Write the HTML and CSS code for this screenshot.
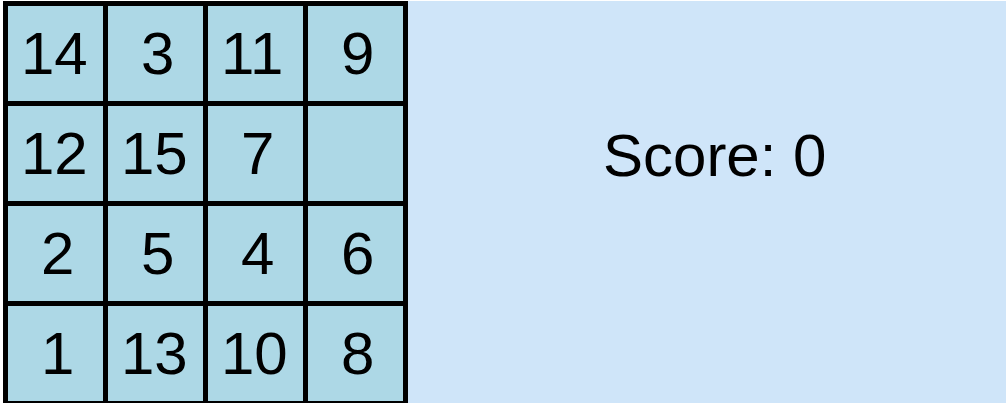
FILE: index.html
```html
<!DOCTYPE html>
<html lang="en">
<head>
<meta charset="utf-8">
<title>Fifteen Puzzle</title>
<link rel="stylesheet" href="styles.css">
</head>
<body>
<main class="game">
  <section class="board" aria-label="Puzzle board">
    <button class="tile">14</button>
    <button class="tile single">3</button>
    <button class="tile">11</button>
    <button class="tile single">9</button>
    <button class="tile">12</button>
    <button class="tile">15</button>
    <button class="tile single">7</button>
    <div class="tile"></div>
    <button class="tile single">2</button>
    <button class="tile single">5</button>
    <button class="tile single">4</button>
    <button class="tile single">6</button>
    <button class="tile single">1</button>
    <button class="tile">13</button>
    <button class="tile">10</button>
    <button class="tile single">8</button>
  </section>
  <section class="panel">
    <p class="score">Score: 0</p>
  </section>
</main>
</body>
</html>
```
FILE: styles.css
```css
* {
  box-sizing: border-box;
}

body {
  margin: 0;
  height: 100vh;
  overflow: hidden;
  background: #ffffff;
  color: #000000;
  font-family: "Liberation Sans", Arial, sans-serif;
  font-size: 60px;
}

.game {
  display: flex;
  padding: 1px 0 0 3px;
}

.board {
  display: grid;
  flex: none;
  grid-template-columns: repeat(4, 95px);
  grid-auto-rows: 95px;
  gap: 5px;
  padding: 5px;
  background: #000000;
}

.tile {
  margin: 0;
  padding: 0 0 0 13px;
  border: 0;
  background: #add8e6;
  color: inherit;
  font: inherit;
  line-height: 95px;
  text-align: left;
}

.single {
  padding-left: 33px;
}

.panel {
  flex: 1;
  padding: 120px 0 0 195px;
  background: #cfe5f9;
}

.score {
  margin: 0;
  line-height: 70px;
  white-space: nowrap;
}
```
